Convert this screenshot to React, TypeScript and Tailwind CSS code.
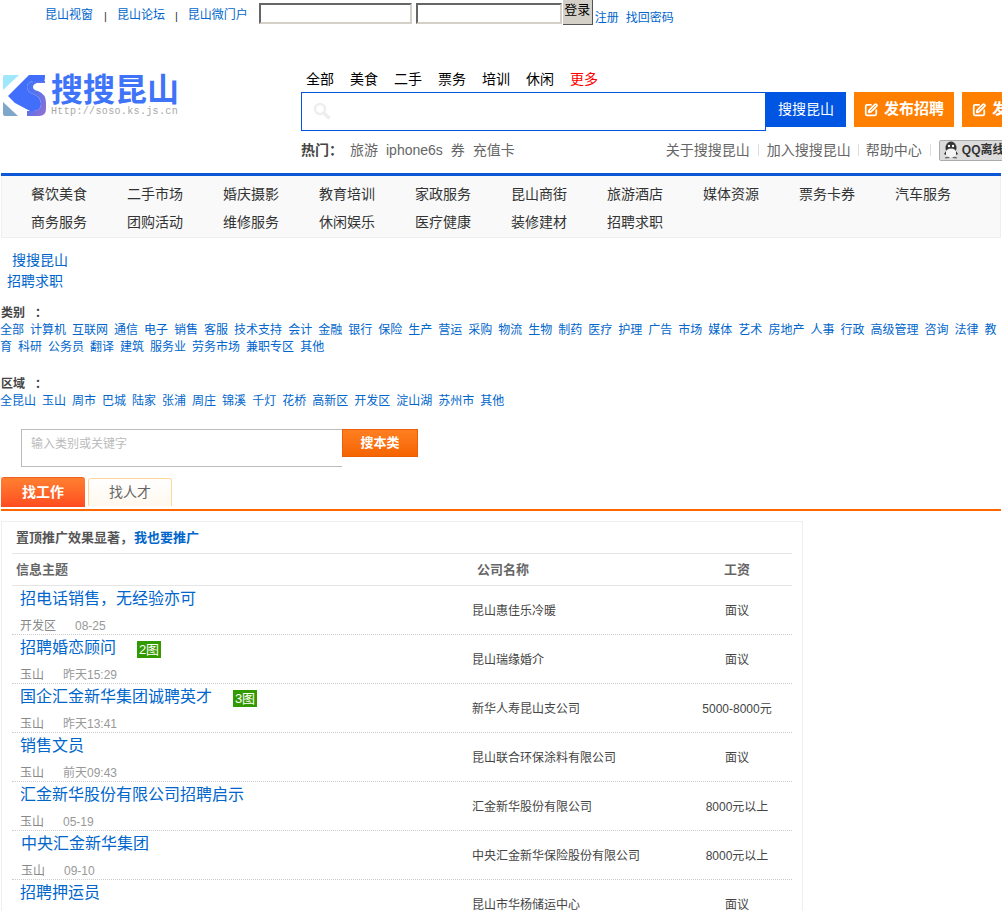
import React from "react";
import { SquarePen } from "lucide-react";

const nav = ["餐饮美食","二手市场","婚庆摄影","教育培训","家政服务","昆山商街","旅游酒店","媒体资源","票务卡券","汽车服务","商务服务","团购活动","维修服务","休闲娱乐","医疗健康","装修建材","招聘求职"];
const cats = ["全部","计算机","互联网","通信","电子","销售","客服","技术支持","会计","金融","银行","保险","生产","营运","采购","物流","生物","制药","医疗","护理","广告","市场","媒体","艺术","房地产","人事","行政","高级管理","咨询","法律","教育","科研","公务员","翻译","建筑","服务业","劳务市场","兼职专区","其他"];
const areas = ["全昆山","玉山","周市","巴城","陆家","张浦","周庄","锦溪","千灯","花桥","高新区","开发区","淀山湖","苏州市","其他"];
const rows = [
  { t: "招电话销售，无经验亦可", a: "开发区", d: "08-25", c: "昆山惠佳乐冷暖", s: "面议" },
  { t: "招聘婚恋顾问", b: "2图", a: "玉山", d: "昨天15:29", c: "昆山瑞缘婚介", s: "面议" },
  { t: "国企汇金新华集团诚聘英才", b: "3图", a: "玉山", d: "昨天13:41", c: "新华人寿昆山支公司", s: "5000-8000元" },
  { t: "销售文员", a: "玉山", d: "前天09:43", c: "昆山联合环保涂料有限公司", s: "面议" },
  { t: "汇金新华股份有限公司招聘启示", a: "玉山", d: "05-19", c: "汇金新华股份有限公司", s: "8000元以上" },
  { t: "中央汇金新华集团", a: "玉山", d: "09-10", c: "中央汇金新华保险股份有限公司", s: "8000元以上" },
  { t: "招聘押运员", a: "玉山", d: "09-08", c: "昆山市华杨储运中心", s: "面议" },
];

function Logo() {
  return (
    <div className="flex items-start">
      <svg width="44" height="42" viewBox="0 0 44 42" className="shrink-0">
        <defs>
          <linearGradient id="sg" x1="0" y1="0" x2="1" y2="1">
            <stop offset="0" stopColor="#3f74fb" />
            <stop offset="0.5" stopColor="#5f72e8" />
            <stop offset="1" stopColor="#9a6fd0" />
          </linearGradient>
        </defs>
        <path d="M0 2 Q0 0 2 0 L16 0 L0 15 Z" fill="#9fe8fc" />
        <path d="M0 27 L15 41 L2 41 Q0 41 0 39 Z" fill="#7fa7c9" />
        <path d="M5 21 L26 0 L42 0 Q42 6 41 6 L30 6 Q24 7 24 12 Q24 17 30 19 Q38 22 38 29 Q38 35 31 36 L27 36 L12 28 Z" fill="#416ffb" />
        <path d="M24 12 Q24 7 30 6 L42 6 L42 8 L34 8 Q30 9 30 12 Q30 15 35 16 Q43 19 43 28 L43 34 Q43 41 36 41 L24 41 L24 36 L30 36 Q38 35 38 29 Q38 22 30 19 Q24 17 24 12 Z" fill="url(#sg)" />
      </svg>
      <div className="ml-[4px] w-[130px]">
        <div className="text-[32px] leading-[30px] font-bold text-[#3f74f8] whitespace-nowrap">搜搜昆山</div>
        <div className="mt-[1px] font-['Liberation_Mono',monospace] text-[10px] leading-[12px] tracking-[0.35px] text-[#a8a8a8]">Http://soso.ks.js.cn</div>
      </div>
    </div>
  );
}

function QQ() {
  return (
    <svg width="16" height="18" viewBox="0 0 16 18" className="shrink-0">
      <ellipse cx="8" cy="7" rx="5.5" ry="6.5" fill="#333" />
      <ellipse cx="8" cy="12" rx="5.5" ry="4.5" fill="#f4f4f4" />
      <circle cx="6" cy="5" r="1.2" fill="#fff" />
      <circle cx="10" cy="5" r="1.2" fill="#fff" />
      <path d="M1 13 L3 10 L3 14 Z M15 13 L13 10 L13 14 Z" fill="#333" />
      <path d="M2 16.5 Q5 15 7 17 L2 17.5 Z M14 16.5 Q11 15 9 17 L14 17.5 Z" fill="#666" />
    </svg>
  );
}

export default function App() {
  return (
    <div className="w-[1002px] h-[911px] overflow-hidden bg-white font-['Liberation_Sans','Noto_Sans_CJK_SC',sans-serif] text-[12px] text-[#333]">
      {/* top bar */}
      <div className="h-[30px] flex items-start pl-[45px] whitespace-nowrap">
        <a className="mt-[7px] leading-[16px] text-[#0066cc]">昆山视窗</a>
        <span className="mt-[8px] ml-[11px] leading-[16px] text-[#333] text-[11px]">|</span>
        <a className="mt-[7px] ml-[10px] leading-[16px] text-[#0066cc]">昆山论坛</a>
        <span className="mt-[8px] ml-[10px] leading-[16px] text-[#333] text-[11px]">|</span>
        <a className="mt-[7px] ml-[10px] leading-[16px] text-[#0066cc]">昆山微门户</a>
        <input className="mt-[3px] ml-[11px] w-[153px] h-[21px] bg-white border-2 border-t-[#666] border-l-[#666] border-r-[#d4d0c8] border-b-[#d4d0c8]" />
        <input className="mt-[3px] ml-[4px] w-[146px] h-[21px] bg-white border-2 border-t-[#666] border-l-[#666] border-r-[#d4d0c8] border-b-[#d4d0c8]" />
        <button className="ml-[1px] w-[30px] h-[25px] pb-[5px] bg-[#d4d0c8] border-r border-b border-[#555] text-[13px] leading-[15px] text-black">登录</button>
        <a className="mt-[10px] ml-[2px] leading-[16px] text-[#0066cc]">注册</a>
        <a className="mt-[10px] ml-[7px] leading-[16px] text-[#0066cc]">找回密码</a>
      </div>

      {/* header */}
      <div className="h-[143px] flex items-start">
        <div className="w-[301px] shrink-0 pl-[3px] pt-[45px]">
          <Logo />
        </div>
        <div className="w-[760px] shrink-0 pt-[40px]">
          <div className="flex gap-[16px] pl-[5px] text-[14px] leading-[18px] text-black h-[22px]">
            {["全部","美食","二手","票务","培训","休闲"].map((x) => <a key={x}>{x}</a>)}
            <a className="text-[#ff0000]">更多</a>
          </div>
          <div className="flex items-start">
            <div className="w-[465px] h-[39px] border border-[#0056e3] flex items-start pl-[11px] pt-[9px] shrink-0">
              <svg width="18" height="18" viewBox="0 0 18 18" fill="none" stroke="#eeeeee" strokeWidth="2.5">
                <circle cx="7" cy="7" r="5" />
                <path d="M11 11 L16.5 16.5" strokeWidth="3.5" />
              </svg>
            </div>
            <button className="w-[80px] h-[35px] bg-[#0056e3] text-white text-[14px] shrink-0">搜搜昆山</button>
            <button className="ml-[8px] w-[100px] h-[35px] bg-[#ff8000] text-white text-[15px] font-bold flex items-center justify-center gap-[6px] shrink-0">
              <SquarePen size={14} strokeWidth={3} />发布招聘
            </button>
            <button className="ml-[8px] w-[100px] h-[35px] bg-[#ff8000] text-white text-[15px] font-bold flex items-center justify-center gap-[6px] shrink-0">
              <SquarePen size={14} strokeWidth={3} />发布求职
            </button>
          </div>
          <div className="mt-[9px] flex items-center h-[20px] text-[14px] text-[#666] whitespace-nowrap">
            <span className="font-bold text-[#444] w-[49px]">热门：</span>
            <a>旅游</a>
            <a className="ml-[8px]">iphone6s</a>
            <a className="ml-[8px]">券</a>
            <a className="ml-[8px]">充值卡</a>
            <a className="ml-[151px]">关于搜搜昆山</a>
            <span className="mx-[8px] w-px h-[12px] bg-[#ddd]" />
            <a>加入搜搜昆山</a>
            <span className="mx-[7px] w-px h-[12px] bg-[#ddd]" />
            <a>帮助中心</a>
            <span className="mx-[8px] w-px h-[12px] bg-[#ddd]" />
            <span className="w-[77px] h-[21px] shrink-0 rounded-[2px] bg-[#dcdcdc] border border-[#aaa] flex items-center pl-[3px] gap-[3px] text-[12px] font-bold text-[#333]"><QQ />QQ离线</span>
          </div>
        </div>
      </div>

      {/* nav */}
      <div className="ml-px w-[1000px] h-[65px] border-t-[3px] border-[#0c58d6] bg-[#f9f9f9]">
        <div className="h-[62px] border-x border-b border-[#eeeeee] pl-[29px] pt-[4px] grid grid-cols-[repeat(10,96px)] auto-rows-[28px] text-[14px] text-[#333] items-center">
          {nav.map((x) => <a key={x}>{x}</a>)}
        </div>
      </div>

      {/* breadcrumb */}
      <div className="mt-[12px] text-[14px] leading-[21px] text-[#0066cc]">
        <div className="pl-[12px]">搜搜昆山</div>
        <div className="pl-[7px]">招聘求职</div>
      </div>

      {/* filters */}
      <div className="mt-[13px] w-[1002px]">
        <div className="pl-[1px] font-bold text-[#444] leading-[17px] whitespace-pre">类别   ：</div>
        <div className="leading-[17px] text-[#0066cc]">
          {cats.map((x) => <a key={x} className="mr-[6px]">{x}</a>)}
        </div>
      </div>
      <div className="mt-[20px] w-[1002px]">
        <div className="pl-[1px] font-bold text-[#444] leading-[17px] whitespace-pre">区域   ：</div>
        <div className="leading-[17px] text-[#0066cc]">
          {areas.map((x) => <a key={x} className="mr-[6px]">{x}</a>)}
        </div>
      </div>

      {/* search */}
      <div className="mt-[19px] ml-[21px] flex items-start">
        <div className="w-[321px] h-[38px] border-l border-t border-b border-[#bbbbbb] pl-[9px] pt-[6px] leading-[16px] text-[#bbbbbb]">输入类别或关键字</div>
        <button className="w-[76px] h-[28px] border border-[#e85f05] bg-gradient-to-b from-[#ff7f20] to-[#f56400] text-white font-bold text-[13px]">搜本类</button>
      </div>

      {/* tabs */}
      <div className="mt-[10px] ml-px w-[1000px] h-[34px] border-b-[2px] border-[#ff6600] flex items-start">
        <div className="w-[84px] h-[30px] rounded-t-[3px] border-t border-[#f06020] bg-gradient-to-b from-[#ff7f30] to-[#ff4a20] text-white font-bold text-[14px] flex items-center justify-center">找工作</div>
        <div className="ml-[3px] mt-px w-[84px] h-[28px] rounded-t-[3px] border-x border-t border-[#ffd99c] bg-gradient-to-b from-white to-[#fff8ee] text-[#666] text-[14px] flex items-center justify-center">找人才</div>
      </div>

      {/* list */}
      <div className="mt-[10px] ml-px w-[802px] border border-[#eeeeee] px-[10px]">
        <div className="h-[32px] border-b border-[#e5e5e5] pl-[4px] flex items-center text-[13px] font-bold text-[#555]">
          置顶推广效果显著，<a className="ml-[1px] text-[#0066cc]">我也要推广</a>
        </div>
        <div className="h-[32px] border-b border-[#e5e5e5] grid grid-cols-[460px_210px_110px] items-center text-[13px] font-bold text-[#666]">
          <div className="pl-[4px]">信息主题</div>
          <div className="pl-[5px]">公司名称</div>
          <div className="text-center">工资</div>
        </div>
        {rows.map((r, i) => (
          <div key={r.t} className="h-[49px] border-b border-dotted border-[#cccccc] grid grid-cols-[460px_210px_110px] items-center">
            <div className={i === 5 ? "pl-[9px]" : "pl-[8px]"}>
              <div className="h-[29px] pt-[3px] flex items-start text-[16px] leading-[20px] text-[#0066cc] whitespace-nowrap">
                {r.t}
                {r.b && <span className="ml-[21px] mt-[3px] w-[24px] h-[17px] bg-[#339900] text-white text-[13px] leading-[17px] text-center">{r.b}</span>}
              </div>
              <div className="h-[19px] pt-[2px] flex items-center text-[#999] whitespace-nowrap">
                <span className="text-[#888]">{r.a}</span>
                <span className="ml-[19px]">{r.d}</span>
              </div>
            </div>
            <div className="pt-[2px] text-[#444]">{r.c}</div>
            <div className="pt-[2px] text-center text-[#444]">{r.s}</div>
          </div>
        ))}
      </div>
    </div>
  );
}
